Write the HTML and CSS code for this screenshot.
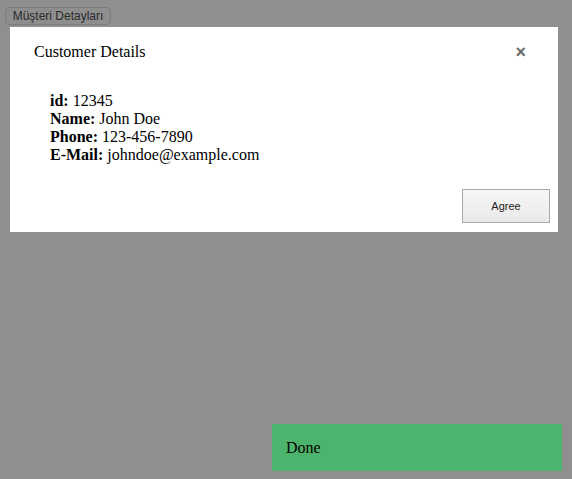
FILE: index.html
```html
<!DOCTYPE html>
<html>
<head>
<meta charset="utf-8">
<link rel="stylesheet" href="styles.css">
</head>
<body>
<button class="open-btn">Müşteri Detayları</button>
<div class="modal">
  <div class="modal-header">
    <span class="modal-title">Customer Details</span>
    <span class="close">&times;</span>
  </div>
  <div class="modal-body">
    <div><b>id:</b> 12345</div>
    <div><b>Name:</b> John Doe</div>
    <div><b>Phone:</b> 123-456-7890</div>
    <div><b>E-Mail:</b> johndoe@example.com</div>
  </div>
  <div class="modal-footer">
    <button class="agree">Agree</button>
  </div>
</div>
<div class="toast">Done</div>
</body>
</html>
```
FILE: styles.css
```css
html, body {
  margin: 0;
  padding: 0;
}
body {
  background: #8f8f8f;
  font-family: "Liberation Serif", "Times New Roman", serif;
  height: 479px;
  overflow: hidden;
}
.open-btn {
  margin: 7px 0 0 5px;
  width: 106px;
  height: 18px;
  padding: 0;
  font-family: "Liberation Sans", Arial, sans-serif;
  font-size: 12px;
  color: #2a2a2a;
  background: #8e8e8e;
  border: 1px solid #7c7c7c;
  border-radius: 4px;
  display: block;
}
.modal {
  position: fixed;
  left: 10px;
  top: 27px;
  width: 548px;
  height: 205px;
  background: #fff;
  display: flex;
  flex-direction: column;
}
.modal-header {
  height: 48px;
  display: flex;
  align-items: center;
  justify-content: space-between;
  padding: 2px 32px 0 24px;
  box-sizing: border-box;
}
.modal-title {
  font-size: 16px;
  color: #000;
}
.close {
  font-family: "Liberation Sans", Arial, sans-serif;
  font-size: 18px;
  font-weight: bold;
  color: #6b6b6b;
  line-height: 1;
}
.modal-body {
  padding: 17px 0 0 40px;
  font-size: 16px;
  line-height: 18px;
  color: #000;
}
.modal-footer {
  margin-top: auto;
  display: flex;
  justify-content: flex-end;
  padding: 0 8px 9px 0;
}
.agree {
  width: 88px;
  height: 34px;
  border: 1px solid #a9a9a9;
  background: linear-gradient(#f7f7f7, #e9e9e9);
  font-family: "Liberation Sans", Arial, sans-serif;
  font-size: 11px;
  color: #222;
  border-radius: 0;
}
.toast {
  position: fixed;
  left: 272px;
  top: 424px;
  width: 276px;
  height: 47px;
  padding-left: 14px;
  background: #4cb46c;
  display: flex;
  align-items: center;
  font-size: 16px;
  color: #000;
}
```
